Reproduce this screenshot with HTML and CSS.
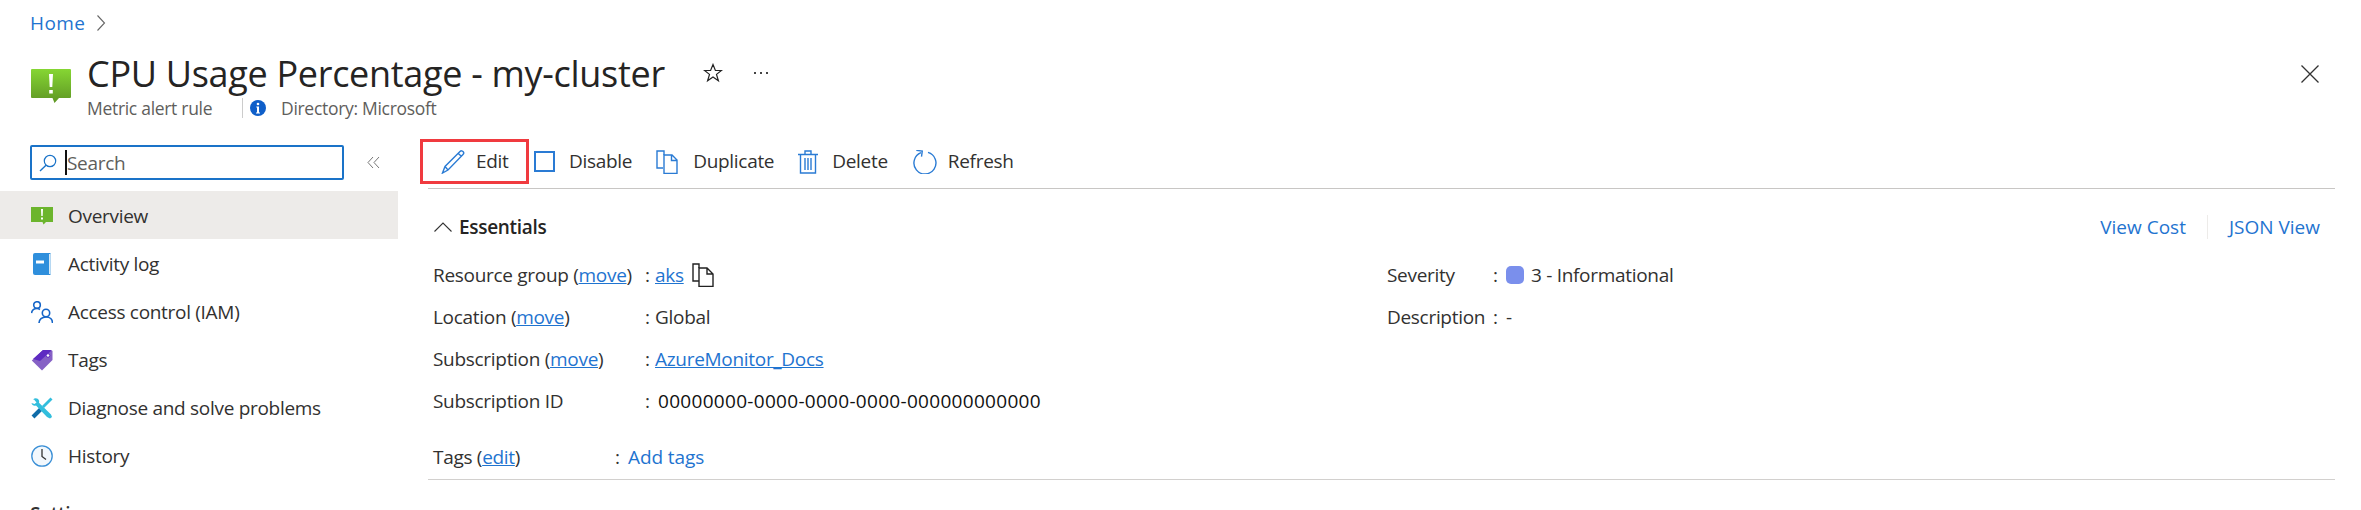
FILE: index.html
```html
<!DOCTYPE html>
<html>
<head lang="en">
    <meta charset="UTF-8">
    <title>CPU Usage Percentage - my-cluster</title>
    <link rel="stylesheet" href="styles.css">
</head>
<body>
    <div class="crumb"><a href="#">Home</a>
        <svg class="crumb-arrow" viewBox="0 0 10 18" width="10" height="18"><path d="M1.5 1.5 8.5 9l-7 7.5" fill="none" stroke="#666" stroke-width="1.1"/></svg>
    </div>

    <div class="head">
        <svg class="head-icon" viewBox="0 0 40 34" width="40" height="34">
            <defs><linearGradient id="g1" x1="0" y1="0" x2="0" y2="1"><stop offset="0" stop-color="#86d633"/><stop offset="1" stop-color="#5e9624"/></linearGradient></defs>
            <path d="M1 0h38a1 1 0 0 1 1 1v27a1 1 0 0 1-1 1H28l-4.5 5-2-5H1a1 1 0 0 1-1-1V1a1 1 0 0 1 1-1z" fill="url(#g1)"/>
            <path d="M18 5h4l-.7 13h-2.600zM18.200 21h3.600v3.600h-3.600z" fill="#fff"/>
        </svg>
        <div class="head-text">
            <div class="title-row">
                <h1>CPU Usage Percentage - my-cluster</h1>
                <svg class="star" viewBox="0 0 20 20" width="20" height="20"><path d="M10 1.500l2.400 6h6.100l-5 3.900 1.900 6.400L10 14l-5.400 3.800 1.900-6.400-5-3.900h6.100z" fill="none" stroke="#222" stroke-width="1.200"/></svg>
                <span class="dots"><i></i><i></i><i></i></span>
            </div>
            <div class="sub">
                <span class="sub-type">Metric alert rule</span>
                <svg class="info" viewBox="0 0 16 16" width="16" height="16"><circle cx="8" cy="8" r="8" fill="#0f5fc9"/><circle cx="8" cy="4" r="1.300" fill="#fff"/><path d="M6.300 6.500h2.700v6h1v1H6v-1h1v-5H6.300z" fill="#fff"/></svg>
                <span>Directory: Microsoft</span>
            </div>
        </div>
        <svg class="close" viewBox="0 0 18 18" width="18" height="18"><path d="M.5.5l17 17M17.500.5l-17 17" stroke="#333" stroke-width="1.300" fill="none"/></svg>
    </div>

    <div class="main">
        <div class="side">
            <div class="search-row">
                <div class="search">
                    <svg viewBox="0 0 18 18" width="18" height="18"><circle cx="11" cy="7" r="5.700" fill="none" stroke="#1a73c8" stroke-width="1.200"/><path d="M7 11.200 1 17" stroke="#1a73c8" stroke-width="1.400"/></svg>
                    <span class="caret"></span><span class="search-text">Search</span>
                </div>
                <svg class="collapse" viewBox="0 0 13 13" width="13" height="13"><path d="M6 1 1 6.500 6 12M12 1 7 6.500l5 5.500" fill="none" stroke="#777" stroke-width="1"/></svg>
            </div>
            <ul class="menu">
                <li class="selected">
                    <svg viewBox="0 0 22 18" width="22" height="18"><path d="M0 0h22v15h-7l-2.500 2.500-1-2.500H0z" fill="#6cb52d"/><path d="M10 2h2l-.3 7h-1.400zM10 10.500h2v2h-2z" fill="#fff"/></svg>
                    Overview
                </li>
                <li>
                    <svg viewBox="0 0 22 22" width="22" height="22"><path d="M4 0h15.500v22H4a2 2 0 0 1-2-2V2a2 2 0 0 1 2-2z" fill="#2f8fdc"/><path d="M18 1h1.500v20H18z" fill="#d5e9f8"/><path d="M5 7.500h8v3H5z" fill="#fff"/></svg>
                    Activity log
                </li>
                <li>
                    <svg viewBox="0 0 22 22" width="22" height="22"><g fill="none" stroke="#1565c8" stroke-width="1.600"><circle cx="6" cy="4" r="3.300"/><path d="M.5 12c.5-3 2.500-4.500 5.500-4.500 1.200 0 2 .3 3 1"/><circle cx="15" cy="12" r="3.700"/><path d="M8 22c0-3.500 3-6 7-6s6.500 2.500 6.500 6"/></g></svg>
                    Access control (IAM)
                </li>
                <li>
                    <svg viewBox="0 0 22 22" width="22" height="22"><path d="M12 1h8a1.500 1.500 0 0 1 1.500 1.500V11L11 21.500.8 11.500z" fill="#8661c5"/><path d="M12 1h8l-.5 1.500L9 12 2 10z" fill="#5e2bc2"/><circle cx="17" cy="6.500" r="1.800" fill="#fff" stroke="#5e2bc2"/></svg>
                    Tags
                </li>
                <li>
                    <svg viewBox="0 0 22 22" width="22" height="22"><path d="M20.500 1.500 12 10" stroke="#32bedd" stroke-width="2.800" fill="none"/><path d="M10 12 2 20" stroke="#0f6ca8" stroke-width="4" fill="none"/><path d="M2 2.500C4 .5 7 1 8 3.500c.3.800.2 1.500 0 2.200L20 17.500l1 2.500-2 1.500-3-1.500L5 8.500c-2 .5-4 0-4.500-2.500L3.500 7l2-1.500-2.500-3z" fill="#32bedd"/></svg>
                    Diagnose and solve problems
                </li>
                <li>
                    <svg viewBox="0 0 22 22" width="22" height="22"><circle cx="11" cy="11" r="10.200" fill="#f2f8fd" stroke="#3a8fd6" stroke-width="1.300"/><path d="M11 4v7.500l4 3" fill="none" stroke="#333" stroke-width="1.300"/></svg>
                    History
                </li>
            </ul>
            <div class="group">Settings</div>
        </div>

        <div class="content">
            <div class="toolbar">
                <div class="tool tool-edit">
                    <svg viewBox="0 0 24 24" width="24" height="24"><path d="M19 1.500c1-1 2.200-.8 3 0s1 2 0 3L7 20l-5.500 3L4 16.500zM4 16.500 7 20M17.300 3.500l3.300 3" fill="none" stroke="#2a7bd4" stroke-width="1.400"/></svg>
                    <span>Edit</span>
                </div>
                <div class="tool tool-disable">
                    <span class="check"></span>
                    <span>Disable</span>
                </div>
                <div class="tool tool-dup">
                    <svg viewBox="0 0 22 24" width="22" height="24"><path d="M8 5V1H1v17h6" fill="none" stroke="#2a7bd4" stroke-width="1.400"/><path d="M8 5h8l5 5v13.500H8zM15.500 5v5.500H21" fill="none" stroke="#2a7bd4" stroke-width="1.400"/></svg>
                    <span>Duplicate</span>
                </div>
                <div class="tool tool-del">
                    <svg viewBox="0 0 20 24" width="20" height="24"><path d="M0 4.500h20M7 4V1h6v3M2.500 5v18h15V5M7 8v12M10 8v12M13 8v12" fill="none" stroke="#2a7bd4" stroke-width="1.400"/></svg>
                    <span>Delete</span>
                </div>
                <div class="tool tool-refresh">
                    <svg viewBox="0 0 24 24" width="24" height="24"><path d="M8 2.700A11 11 0 1 0 15 2.400" fill="none" stroke="#2a7bd4" stroke-width="1.400"/><path d="M3 1h6v5.500" fill="none" stroke="#2a7bd4" stroke-width="1.400" transform="rotate(8 8 3)"/></svg>
                    <span>Refresh</span>
                </div>
            </div>

            <div class="ess-head">
                <svg viewBox="0 0 18 10" width="18" height="10"><path d="M.5 9.500 9 1l8.500 8.500" fill="none" stroke="#333" stroke-width="1.100"/></svg>
                <span class="ess-title">Essentials</span>
                <a class="ess-link" href="#">View Cost</a>
                <span class="ess-sep"></span>
                <a class="ess-link" href="#">JSON View</a>
            </div>

            <div class="props">
                <div class="col-left">
                    <div class="prop"><span class="label">Resource group (<a href="#">move</a>)</span><span class="colon">:</span><a href="#">aks</a>
                        <svg class="copy" viewBox="0 0 22 24" width="22" height="24"><path d="M7 5V1H1v17h6" fill="none" stroke="#222" stroke-width="1.400"/><path d="M7 5h8l6 6v12.500H7zM15 5v6h6" fill="none" stroke="#222" stroke-width="1.400"/></svg>
                    </div>
                    <div class="prop"><span class="label">Location (<a href="#">move</a>)</span><span class="colon">:</span>Global</div>
                    <div class="prop"><span class="label">Subscription (<a href="#">move</a>)</span><span class="colon">:</span><a href="#">AzureMonitor_Docs</a></div>
                    <div class="prop"><span class="label">Subscription ID</span><span class="colon">:</span><span class="sub-id">00000000-0000-0000-0000-000000000000</span></div>
                </div>
                <div class="col-right">
                    <div class="prop"><span class="label">Severity</span><span class="colon">:</span><span class="sev"></span>3 - Informational</div>
                    <div class="prop"><span class="label">Description</span><span class="colon">:</span>-</div>
                </div>
            </div>

            <div class="tags">
                <span class="label">Tags (<a href="#">edit</a>)</span><span class="colon">:</span><a class="plain" href="#">Add tags</a>
            </div>
        </div>
    </div>
</body>
</html>
```

FILE: styles.css
```css
*{
    margin: 0;
    padding: 0;
    box-sizing: border-box;
}
ul{
    list-style: none;
}
html,body{
    width: 2361px;
    height: 510px;
    overflow: hidden;
}
body{
    background: #fff;
    color: #323130;
    font-family: "Open Sans", "Liberation Sans", sans-serif;
    font-size: 19px;
    letter-spacing: -0.3px;
}
a{
    color: #1f74d0;
}
svg{
    flex: none;
    display: block;
}
.crumb{
    height: 48px;
    padding: 0 0 2px 30px;
    display: flex;
    align-items: center;
}
.crumb a{
    color: #1f74d0;
    text-decoration: none;
    letter-spacing: 0.4px;
}
.crumb-arrow{
    margin-left: 11px;
}
.head{
    height: 88px;
    padding-left: 31px;
    display: flex;
    align-items: flex-start;
}
.head-icon{
    margin-top: 21px;
}
.head-text{
    margin-left: 16px;
    flex: 1;
}
.title-row{
    height: 50px;
    display: flex;
    align-items: center;
}
h1{
    font-size: 36px;
    font-weight: 500;
    letter-spacing: -0.3px;
    color: #252423;
    width: 616px;
    white-space: nowrap;
}
.dots{
    margin-left: 31px;
    display: flex;
    gap: 4px;
}
.dots i{
    width: 2px;
    height: 2px;
    background: #444;
}
.sub{
    display: flex;
    align-items: center;
    height: 20px;
    font-size: 17.5px;
    color: #605e5c;
}
.sub-type{
    width: 156px;
    height: 20px;
    line-height: 20px;
    border-right: 1px solid #ccc;
}
.info{
    margin-left: 7px;
    margin-right: 15px;
}
.close{
    margin: 17px 42px 0 0;
}
.main{
    display: flex;
}
.side{
    width: 398px;
    flex: none;
}
.search-row{
    height: 55px;
    padding: 9px 0 0 30px;
    display: flex;
    align-items: flex-start;
}
.search{
    width: 314px;
    height: 35px;
    border: 2px solid #1a73c8;
    border-radius: 2px;
    padding-left: 7px;
    display: flex;
    align-items: center;
}
.caret{
    width: 2px;
    height: 25px;
    background: #111;
    margin-left: 8px;
}
.search-text{
    color: #605e5c;
}
.collapse{
    margin: 11px 0 0 23px;
}
.menu li{
    height: 48px;
    padding: 1px 0 0 31px;
    display: flex;
    align-items: center;
    gap: 15px;
}
.menu .selected{
    background: #edebe9;
}
.group{
    padding: 22px 0 0 30px;
    font-weight: 600;
}
.content{
    flex: 1;
    margin: 3px 26px 0 30px;
}
.toolbar{
    height: 50px;
    margin-left: -8px;
    padding-bottom: 5px;
    display: flex;
    align-items: center;
    background: linear-gradient(#c8c6c4, #c8c6c4) 8px bottom / 100% 1px no-repeat;
}
.tool{
    display: flex;
    align-items: center;
    gap: 13px;
    color: #323130;
}
.tool span:last-child{
    padding-bottom: 2px;
}
.tool-edit{
    width: 109px;
    height: 45px;
    border: 3px solid #f03a3f;
    padding-left: 18px;
    gap: 11px;
}
.tool-disable{
    margin-left: 5px;
    gap: 14px;
}
.tool-dup{
    margin-left: 24px;
    gap: 15px;
}
.tool-del{
    margin-left: 24px;
    gap: 14px;
}
.tool-refresh{
    margin-left: 25px;
    gap: 11px;
}
.check{
    width: 21px;
    height: 21px;
    border: 2px solid #2a7bd4;
}
.ess-head{
    height: 53px;
    margin-top: 11px;
    padding: 0 15px 0 6px;
    display: flex;
    align-items: center;
    gap: 7px;
}
.ess-title{
    font-weight: 600;
    flex: 1;
    color: #252423;
}
.ess-link{
    color: #1f74d0;
    text-decoration: none;
    letter-spacing: 0;
}
.ess-sep{
    width: 1px;
    height: 24px;
    background: #edebe9;
    margin: 0 14px;
}
.props{
    padding-top: 1px;
    padding-left: 5px;
    display: flex;
}
.col-left{
    width: 954px;
}
.col-left .label{
    width: 212px;
}
.col-right .label{
    width: 106px;
}
.prop{
    height: 42px;
    display: flex;
    align-items: center;
    white-space: pre;
}
.label{
    flex: none;
}
.colon{
    width: 10px;
    flex: none;
}
.col-right .colon{
    width: 13px;
}
.sub-id{
    margin-left: 3px;
    color: #111;
    letter-spacing: 0.3px;
}
.copy{
    margin-left: 8px;
}
.sev{
    width: 18px;
    height: 18px;
    border-radius: 5px;
    background: #7a8fec;
    margin-right: 7px;
}
.tags{
    margin-top: 15px;
    padding: 0 0 2px 5px;
    height: 43px;
    border-bottom: 1px solid #d2d0ce;
    display: flex;
    align-items: center;
}
.tags .label{
    width: 182px;
}
.tags .colon{
    width: 13px;
}
.plain{
    text-decoration: none;
    letter-spacing: -0.1px;
}
```
